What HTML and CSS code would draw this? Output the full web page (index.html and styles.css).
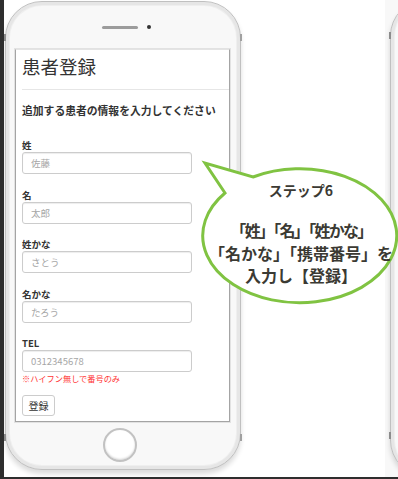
FILE: index.html
```html
<!DOCTYPE html>
<html lang="ja">
<head>
<meta charset="utf-8">
<title>患者登録</title>
<link rel="stylesheet" href="styles.css">
</head>
<body>
<div class="canvas">
  <div class="phone phone-main">
    <span class="mark mark-l1"></span>
    <span class="mark mark-l2"></span>
    <span class="mark mark-r1"></span>
    <span class="mark mark-r2"></span>
    <div class="speaker-row"><span class="speaker"></span><span class="camera"></span></div>
    <div class="screen">
      <div class="page">
        <h1 class="title">患者登録</h1>
        <hr class="rule">
        <p class="lead">追加する患者の情報を入力してください</p>
        <div class="field field-first"><label class="label">姓</label><input class="input" placeholder="佐藤"></div>
        <div class="field"><label class="label">名</label><input class="input" placeholder="太郎"></div>
        <div class="field"><label class="label">姓かな</label><input class="input" placeholder="さとう"></div>
        <div class="field"><label class="label">名かな</label><input class="input" placeholder="たろう"></div>
        <div class="field"><label class="label">TEL</label><input class="input" placeholder="0312345678"></div>
        <p class="note">※ハイフン無しで番号のみ</p>
        <button class="btn">登録</button>
      </div>
    </div>
    <div class="home"></div>
  </div>
  <div class="phone phone-next">
    <span class="mark mark-l1"></span>
    <span class="mark mark-l2"></span>
  </div>
  <svg class="bubble-shape" viewBox="0 0 398 477" width="398" height="477">
    <path d="M 225 193 L 205 163 L 253 177 A 97 67 0 1 1 225 193 Z" fill="#fff" stroke="#80c342" stroke-width="3" stroke-linejoin="miter"/>
  </svg>
  <div class="bubble-text">
    <div class="step">ステップ6</div>
    <div class="msg">
      <div class="msg-line tight">「姓」「名」「姓かな」</div>
      <div class="msg-line">「名かな」「携帯番号」を</div>
      <div class="msg-line">入力し【登録】</div>
    </div>
  </div>
</div>
</body>
</html>
```
FILE: styles.css
```css
* { box-sizing: border-box; }
html, body {
  margin: 0;
  padding: 0;
}
body {
  width: 398px;
  height: 479px;
  overflow: hidden;
  background: #2e2e2e;
  font-family: "Noto Sans CJK JP", "Noto Sans", sans-serif;
  color: #333;
}
.canvas {
  position: relative;
  margin-left: 4px;
  width: 394px;
  height: 477px;
  overflow: hidden;
  background: linear-gradient(to right, #fff 381px, #f8f8f8 381px);
  display: flex;
  align-items: flex-start;
  gap: 149px;
  padding-left: 1px;
}
.phone {
  position: relative;
  flex: none;
  width: 236px;
  border-radius: 37px;
  border: 1px solid #c0c0c0;
  background: #f8f8f8;
  box-shadow: inset 0 0 0 3px #e6e6e6, inset 0 0 0 4px #efefef, 0 4px 5px rgba(0,0,0,0.14);
}
.phone-main {
  margin-top: 1px;
  height: 469px;
  display: flex;
  flex-direction: column;
  align-items: flex-start;
  padding-left: 9px;
}
.phone-next {
  margin-top: -1px;
  height: 478px;
}
.mark {
  position: absolute;
  width: 2px;
  height: 7px;
  background: #8c8c8c;
}
.mark-l1 { left: -2px; top: 32px; }
.mark-l2 { left: -2px; top: 432px; }
.mark-r1 { right: -2px; top: 32px; background: #a0a0a0; }
.mark-r2 { right: -2px; top: 432px; background: #a0a0a0; }

.speaker-row {
  display: flex;
  align-items: center;
  margin-top: 23px;
  margin-left: 87px;
  height: 4px;
}
.speaker {
  width: 36px;
  height: 3px;
  border-radius: 2px;
  background: #9c9c9c;
}
.camera {
  margin-left: 9px;
  width: 4px;
  height: 4px;
  border-radius: 50%;
  background: #333;
}
.screen {
  margin-top: 20px;
  width: 215px;
  height: 373px;
  border: 1px solid #a4a4a4;
  border-top-color: #e4e4e4;
  background: #fff;
  overflow: hidden;
  box-shadow: 0 0 0 1px #e2e2e2;
}
.page {
  width: 260px;
  padding-left: 6px;
}
.title {
  margin: 4px 0 0;
  font-size: 18.5px;
  line-height: 24px;
  font-weight: normal;
  color: #333;
}
.rule {
  margin: 11px 0 0;
  height: 0;
  border: 0;
  border-top: 1px solid #e6e6e6;
}
.lead {
  margin: 12px 0 0;
  font-size: 10.8px;
  line-height: 16px;
  font-weight: bold;
  color: #333;
  white-space: nowrap;
}
.field { margin-top: 13.5px; }
.field-first { margin-top: 20px; }
.label {
  display: block;
  font-size: 9.5px;
  line-height: 14px;
  font-weight: bold;
  color: #333;
}
.input {
  display: block;
  width: 170px;
  height: 22px;
  margin: 0;
  border: 1px solid #ccc;
  border-radius: 3px;
  padding: 0 8px;
  font-family: "Noto Sans CJK JP", "Noto Sans", sans-serif;
  font-size: 9.5px;
  color: #555;
  background: #fff;
  box-shadow: inset 0 1px 1px rgba(0,0,0,0.075);
  outline: none;
}
.input::placeholder { color: #a6a6a6; }
.note {
  margin: 0;
  font-size: 8.2px;
  line-height: 12px;
  color: #f33;
  white-space: nowrap;
}
.btn {
  display: block;
  margin-top: 11px;
  width: 33px;
  height: 21px;
  padding: 0;
  border: 1px solid #ccc;
  border-radius: 3px;
  background: #fff;
  font-family: "Noto Sans CJK JP", "Noto Sans", sans-serif;
  font-size: 10px;
  color: #333;
}
.home {
  margin-top: 6px;
  margin-left: 88px;
  width: 34px;
  height: 34px;
  border-radius: 50%;
  border: 2px solid #c2c2c2;
  background: #fff;
  box-shadow: inset 0 -1px 2px rgba(0,0,0,0.15);
}
.bubble-shape {
  position: absolute;
  left: -4px;
  top: 0;
  width: 398px;
  height: 477px;
}
.bubble-text {
  position: absolute;
  left: 197px;
  top: 179px;
  width: 200px;
  text-align: center;
  color: #3b3a33;
  font-weight: bold;
}
.step {
  font-size: 14px;
  line-height: 22px;
}
.msg {
  margin-top: 18px;
  font-size: 16px;
  line-height: 22.5px;
  white-space: nowrap;
}
.tight { letter-spacing: -1.7px; }
```
